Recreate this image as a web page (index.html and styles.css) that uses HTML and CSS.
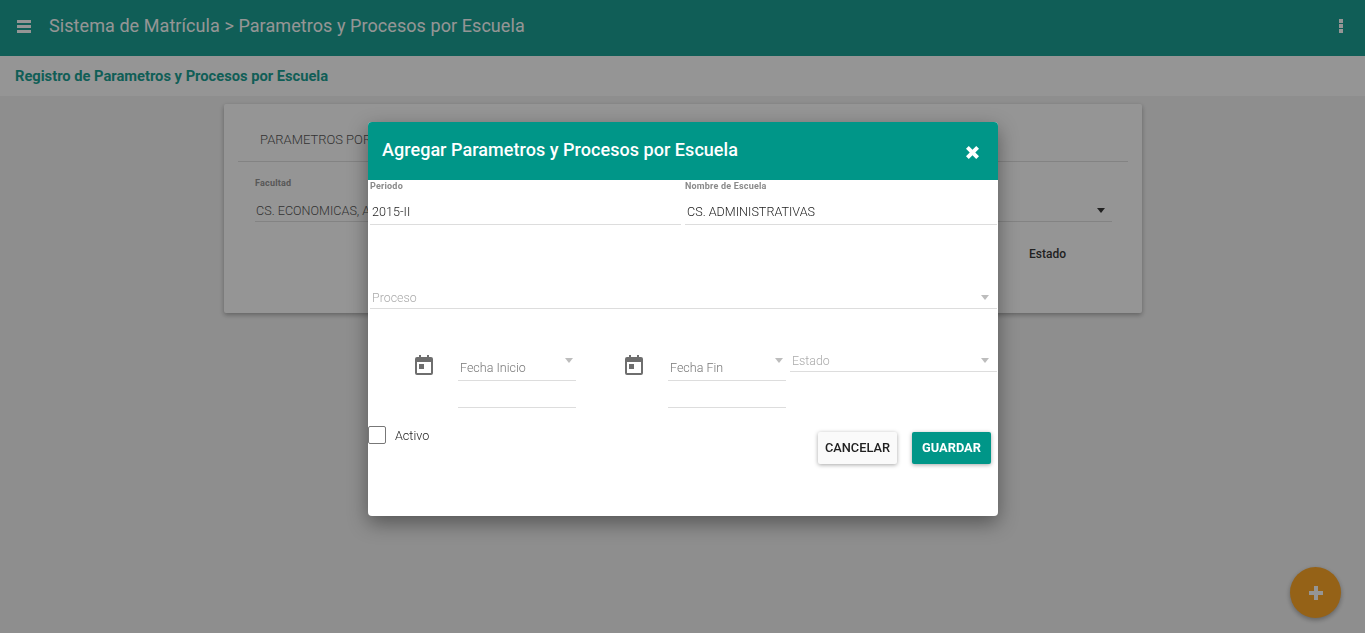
FILE: index.html
```html
<!DOCTYPE html>
<html lang="en">
<head>
    <meta charset="UTF-8">
    <title>Parametros y Procesos por Escuela</title>
    <link rel="stylesheet" href="styles.css">
</head>
<body>
    <header class="toolbar">
        <svg class="menu-icon" viewBox="0 0 14 13" width="14" height="13"><path d="M0 0h14v3H0zM0 5h14v3H0zM0 10h14v3H0z"/></svg>
        <span class="toolbar-title">Sistema de Matrícula &gt; Parametros y Procesos por Escuela</span>
        <svg class="more-icon" viewBox="0 0 4 14" width="4" height="14"><path d="M0 0h4v4H0zM0 5h4v4H0zM0 10h4v4H0z"/></svg>
    </header>

    <div class="subbar">Registro de Parametros y Procesos por Escuela</div>

    <main class="card">
        <div class="tab-row"><span class="tab">PARAMETROS POR</span></div>
        <div class="card-field">
            <label class="mini-label">Facultad</label>
            <div class="card-select">
                <span>CS. ECONOMICAS, A</span>
                <i class="caret caret-dark"></i>
            </div>
        </div>
        <div class="card-foot">Estado</div>
    </main>

    <button class="fab" type="button">
        <svg viewBox="0 0 14 14" width="14" height="14"><path d="M5 0h4v5h5v4H9v5H5V9H0V5h5z"/></svg>
    </button>

    <div class="backdrop"></div>

    <section class="dialog">
        <div class="dialog-head">
            <h2>Agregar Parametros y Procesos por Escuela</h2>
            <svg class="close-icon" viewBox="0 0 14 14" width="13" height="13"><path d="M0 3l3-3 4 4 4-4 3 3-4 4 4 4-3 3-4-4-4 4-3-3 4-4z"/></svg>
        </div>
        <div class="dialog-body">
            <div class="row-two">
                <div>
                    <label class="mini-label">Periodo</label>
                    <div class="line-input">2015-II</div>
                </div>
                <div>
                    <label class="mini-label">Nombre de Escuela</label>
                    <div class="line-input">CS. ADMINISTRATIVAS</div>
                </div>
            </div>

            <div class="select-line proceso">
                <span>Proceso</span>
                <i class="caret"></i>
            </div>

            <div class="row-dates">
                <div class="date-col">
                    <svg class="cal-icon" viewBox="0 0 18 20" width="18" height="20"><path d="M4 0h2v2h6V0h2v2h2a2 2 0 0 1 2 2v14a2 2 0 0 1-2 2H2a2 2 0 0 1-2-2V4a2 2 0 0 1 2-2h2zM2 7v11h14V7zM4 9h5v5H4z" fill-rule="evenodd"/></svg>
                    <div class="date-fields">
                        <div class="date-line"><span>Fecha Inicio</span><i class="caret"></i></div>
                        <div class="date-empty"></div>
                    </div>
                </div>
                <div class="date-col">
                    <svg class="cal-icon" viewBox="0 0 18 20" width="18" height="20"><path d="M4 0h2v2h6V0h2v2h2a2 2 0 0 1 2 2v14a2 2 0 0 1-2 2H2a2 2 0 0 1-2-2V4a2 2 0 0 1 2-2h2zM2 7v11h14V7zM4 9h5v5H4z" fill-rule="evenodd"/></svg>
                    <div class="date-fields">
                        <div class="date-line"><span>Fecha Fin</span><i class="caret"></i></div>
                        <div class="date-empty"></div>
                    </div>
                </div>
                <div class="select-line estado">
                    <span>Estado</span>
                    <i class="caret"></i>
                </div>
            </div>

            <div class="row-actions">
                <label class="check"><i class="check-box"></i>Activo</label>
                <div class="actions">
                    <button class="btn" type="button">CANCELAR</button>
                    <button class="btn btn-primary" type="button">GUARDAR</button>
                </div>
            </div>
        </div>
    </section>
</body>
</html>
```

FILE: styles.css
```css
* {
    box-sizing: border-box;
}
html, body {
    height: 100%;
}
body {
    margin: 0;
    overflow: hidden;
    background: #f2f2f2;
    font-family: Roboto, Arial, sans-serif;
    color: #212121;
}
.toolbar {
    display: flex;
    align-items: center;
    height: 56px;
    padding: 0 22px 0 17px;
    background: #009688;
    color: #fff;
}
.menu-icon, .more-icon {
    fill: #fff;
}
.menu-icon {
    margin-top: -3px;
}
.more-icon {
    margin-top: -4px;
}
.toolbar-title {
    flex: 1;
    margin: 0 0 6px 18px;
    font-size: 18px;
    letter-spacing: .07px;
}
.subbar {
    height: 40px;
    padding: 0 15px;
    line-height: 40px;
    background: #fff;
    color: #009688;
    font-size: 14.7px;
    font-weight: 700;
}
.card {
    width: 918px;
    height: 209px;
    margin: 8px 0 0 224px;
    padding: 0 14px;
    background: #fff;
    box-shadow: 0 2px 5px rgba(0, 0, 0, .35);
    border-radius: 2px;
}
.tab-row {
    height: 58px;
    padding: 25px 0 0 22px;
    border-bottom: 1px solid #ddd;
}
.tab {
    font-size: 13px;
    font-weight: 300;
    color: #444;
}
.card-field {
    padding: 16px 16px 0 17px;
}
.mini-label {
    display: block;
    height: 11px;
    font-size: 9px;
    line-height: 11px;
    font-weight: 700;
    color: #8a8a8a;
    letter-spacing: .2px;
}
.card-select {
    display: flex;
    align-items: center;
    justify-content: space-between;
    height: 33px;
    padding: 10px 7px 0 1px;
    border-bottom: 1px solid #ddd;
    font-size: 12.6px;
    font-weight: 300;
    color: #444;
}
.card-foot {
    padding: 25px 0 0 791px;
    font-size: 12px;
    font-weight: 500;
}
.caret {
    display: block;
    width: 0;
    height: 0;
    border-left: 4px solid transparent;
    border-right: 4px solid transparent;
    border-top: 5px solid #bdbdbd;
}
.caret-dark {
    border-top-color: #222;
}
.fab {
    position: absolute;
    left: 1290px;
    top: 567px;
    display: flex;
    align-items: center;
    justify-content: center;
    width: 51px;
    height: 51px;
    padding: 0;
    border: none;
    border-radius: 50%;
    background: #ff9e0f;
    box-shadow: 0 2px 5px rgba(0, 0, 0, .35);
}
.fab svg {
    fill: #fff;
}
.backdrop {
    position: fixed;
    inset: 0;
    background: rgba(33, 33, 33, .48);
}
.dialog {
    position: absolute;
    left: 368px;
    top: 122px;
    width: 630px;
    height: 394px;
    background: #fff;
    border-radius: 4px;
    box-shadow: 0 7px 20px rgba(0, 0, 0, .4);
}
.dialog-head {
    display: flex;
    align-items: center;
    justify-content: space-between;
    height: 58px;
    padding: 0 19px 0 14px;
    background: #009688;
    color: #fff;
    border-radius: 4px 4px 0 0;
}
.dialog-head h2 {
    margin: 0 0 4px;
    font-size: 18px;
    font-weight: 500;
    letter-spacing: .04px;
}
.close-icon {
    fill: #fff;
    margin-top: 3px;
}
.dialog-body {
    padding: 1px 1px 0 2px;
}
.row-two {
    display: grid;
    grid-template-columns: 311px 312px;
    column-gap: 4px;
}
.line-input {
    display: flex;
    align-items: center;
    height: 33px;
    padding: 7px 2px 0;
    border-bottom: 1px solid #ddd;
    font-size: 12.6px;
    font-weight: 300;
    color: #222;
}
.select-line {
    display: flex;
    align-items: center;
    justify-content: space-between;
    height: 25px;
    padding: 2px 8px 0 2px;
    border-bottom: 1px solid #ddd;
    font-size: 12.4px;
    font-weight: 300;
    color: #aaa;
}
.proceso {
    margin-top: 59px;
}
.row-dates {
    display: flex;
    align-items: flex-start;
    margin-top: 38px;
}
.date-col {
    display: flex;
    align-items: flex-start;
    width: 210px;
    padding: 8px 0 0 45px;
}
.cal-icon {
    flex: none;
    fill: #6e6e6e;
}
.date-fields {
    width: 118px;
    margin-left: 25px;
}
.date-line {
    display: flex;
    justify-content: space-between;
    height: 26px;
    padding: 5px 3px 0 2px;
    border-bottom: 1px solid #ddd;
    font-size: 12.5px;
    font-weight: 300;
    color: #777;
}
.date-line .caret {
    margin-top: -2px;
}
.date-empty {
    height: 27px;
    border-bottom: 1px solid #ddd;
}
.estado {
    width: 207px;
}
.row-actions {
    display: flex;
    justify-content: space-between;
    margin: 17px 6px 0 -2px;
}
.check {
    display: flex;
    align-items: center;
    height: 20px;
    font-size: 12.6px;
    font-weight: 300;
    color: #222;
}
.check-box {
    width: 18px;
    height: 18px;
    margin-right: 9px;
    border: 1px solid #777;
    border-radius: 2px;
}
.actions {
    display: flex;
    gap: 15px;
    margin-top: 7px;
}
.btn {
    width: 79px;
    height: 32px;
    padding: 0 0 2px;
    border: none;
    border-radius: 2px;
    background: #fafafa;
    box-shadow: 0 1px 4px rgba(0, 0, 0, .35);
    font-family: inherit;
    font-size: 12.8px;
    font-weight: 500;
    color: #212121;
}
.btn-primary {
    background: #009688;
    color: #fff;
    font-weight: 700;
}
```
